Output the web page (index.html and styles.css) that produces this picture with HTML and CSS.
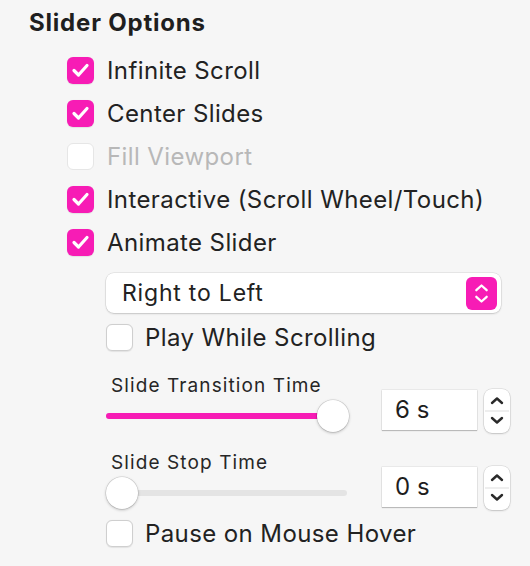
FILE: index.html
```html
<!DOCTYPE html>
<html lang="en">
<head>
  <meta charset="UTF-8">
  <title>Slider Options</title>
  <link rel="stylesheet" href="styles.css">
</head>
<body>
  <div class="panel">
    <h2 class="title">Slider Options</h2>

    <div class="options">
      <label class="check-row">
        <span class="box checked"><svg viewBox="0 0 27 27"><path d="M7 13.5 L11.5 18 L20 8.5" /></svg></span>
        Infinite Scroll
      </label>
      <label class="check-row">
        <span class="box checked"><svg viewBox="0 0 27 27"><path d="M7 13.5 L11.5 18 L20 8.5" /></svg></span>
        Center Slides
      </label>
      <label class="check-row disabled">
        <span class="box"></span>
        Fill Viewport
      </label>
      <label class="check-row">
        <span class="box checked"><svg viewBox="0 0 27 27"><path d="M7 13.5 L11.5 18 L20 8.5" /></svg></span>
        Interactive (Scroll Wheel/Touch)
      </label>
      <label class="check-row">
        <span class="box checked"><svg viewBox="0 0 27 27"><path d="M7 13.5 L11.5 18 L20 8.5" /></svg></span>
        Animate Slider
      </label>

      <div class="sub">
        <div class="select">
          <span>Right to Left</span>
          <span class="select-btn">
            <svg viewBox="0 0 31 35"><path d="M10 14 L15.5 9 L21 14 M10 21 L15.5 26 L21 21" /></svg>
          </span>
        </div>

        <label class="check-row small">
          <span class="box"></span>
          Play While Scrolling
        </label>

        <div class="slider-group">
          <div class="slider-col">
            <div class="slider-label">Slide Transition Time</div>
            <div class="slider">
              <div class="track"><div class="fill" style="width: 94%"></div></div>
              <div class="thumb" style="left: 94%"></div>
            </div>
          </div>
          <div class="field">6 s</div>
          <div class="stepper">
            <svg viewBox="0 0 26 44"><path d="M8 14 L13 9.5 L18 14 M8 29 L13 33.5 L18 29" /><line x1="1" y1="22" x2="25" y2="22" /></svg>
          </div>
        </div>

        <div class="slider-group stop">
          <div class="slider-col">
            <div class="slider-label">Slide Stop Time</div>
            <div class="slider">
              <div class="track"><div class="fill" style="width: 0%"></div></div>
              <div class="thumb" style="left: 6.6%"></div>
            </div>
          </div>
          <div class="field">0 s</div>
          <div class="stepper">
            <svg viewBox="0 0 26 44"><path d="M8 14 L13 9.5 L18 14 M8 29 L13 33.5 L18 29" /><line x1="1" y1="22" x2="25" y2="22" /></svg>
          </div>
        </div>

        <label class="check-row small last">
          <span class="box"></span>
          Pause on Mouse Hover
        </label>
      </div>
    </div>
  </div>
</body>
</html>
```

FILE: styles.css
```css
body {
  margin: 0;
  background: #f6f6f6;
  font-family: Inter, "Noto Sans", "Liberation Sans", sans-serif;
  color: #222222;
}

.panel {
  padding: 8px 0 0 29px;
}

.title {
  margin: 0;
  font-size: 24px;
  font-weight: 700;
  letter-spacing: 0.8px;
  line-height: 30px;
  color: #1f1f1f;
}

.options {
  margin-left: 38px;
  margin-top: 11px;
}

.check-row {
  display: flex;
  align-items: center;
  gap: 13px;
  height: 43px;
  font-size: 24px;
  letter-spacing: 0.4px;
}

.check-row.disabled {
  color: #b8b8b8;
}

.box {
  width: 27px;
  height: 27px;
  box-sizing: border-box;
  border-radius: 6px;
  background: #ffffff;
  border: 1px solid #cfcfcf;
  box-shadow: 0 0.5px 1px rgba(0, 0, 0, 0.08);
  flex-shrink: 0;
}

.check-row.disabled .box {
  border-color: #e6e6e6;
  box-shadow: none;
}

.box.checked {
  background: #f71cb5;
  border: none;
}

.box svg {
  display: block;
  width: 27px;
  height: 27px;
}

.box svg path {
  fill: none;
  stroke: #ffffff;
  stroke-width: 3.2;
  stroke-linecap: round;
  stroke-linejoin: round;
}

.sub {
  margin-left: 39px;
  padding-top: 9px;
}

.select {
  width: 395px;
  height: 40px;
  box-sizing: border-box;
  background: #ffffff;
  border-radius: 8px;
  box-shadow: 0 0 0 0.5px rgba(0, 0, 0, 0.12), 0 1px 2px rgba(0, 0, 0, 0.15);
  display: flex;
  align-items: center;
  justify-content: space-between;
  padding: 0 4px 0 16px;
  font-size: 23px;
  letter-spacing: 0.8px;
}

.select-btn {
  width: 31px;
  height: 33px;
  border-radius: 6px;
  background: #f71cb5;
}

.select-btn svg {
  display: block;
  width: 31px;
  height: 33px;
}

.select-btn svg path {
  fill: none;
  stroke: #ffffff;
  stroke-width: 2.4;
  stroke-linecap: round;
  stroke-linejoin: round;
}

.check-row.small {
  gap: 12px;
  height: 43px;
  margin-top: 3px;
}

.slider-group {
  display: flex;
  align-items: flex-end;
  margin-top: 16px;
}

.slider-group.stop {
  margin-top: 20px;
}

.slider-col {
  width: 241px;
}

.slider-label {
  font-size: 19px;
  letter-spacing: 1.1px;
  line-height: 22px;
  padding-left: 5px;
  color: #262626;
}

.slider {
  position: relative;
  height: 32px;
  margin-top: 3px;
}

.track {
  position: absolute;
  left: 0;
  right: 0;
  top: 13px;
  height: 6px;
  border-radius: 3px;
  background: #e4e4e4;
}

.fill {
  height: 100%;
  border-radius: 3px;
  background: #f71cb5;
}

.thumb {
  position: absolute;
  top: 0;
  width: 32px;
  height: 32px;
  margin-left: -16px;
  border-radius: 50%;
  background: #ffffff;
  box-shadow: 0 0 0 0.5px rgba(0, 0, 0, 0.15), 0 1px 3px rgba(0, 0, 0, 0.25);
}

.field {
  width: 95px;
  height: 40px;
  box-sizing: border-box;
  margin-left: 35px;
  margin-bottom: 2px;
  background: #ffffff;
  box-shadow: 0 0 0 0.5px rgba(0, 0, 0, 0.1), 0 1px 1px rgba(0, 0, 0, 0.2);
  font-size: 24px;
  line-height: 40px;
  padding-left: 13px;
  color: #1e1e1e;
}

.stepper {
  width: 26px;
  height: 44px;
  margin-left: 7px;
  margin-bottom: -1px;
  border-radius: 8px;
  background: #ffffff;
  box-shadow: 0 0 0 0.5px rgba(0, 0, 0, 0.14), 0 1px 2px rgba(0, 0, 0, 0.15);
}

.stepper svg {
  display: block;
  width: 26px;
  height: 44px;
}

.stepper svg path {
  fill: none;
  stroke: #2a2a2a;
  stroke-width: 2.4;
  stroke-linecap: round;
  stroke-linejoin: round;
}

.stepper svg line {
  stroke: #dddddd;
  stroke-width: 1;
}

.check-row.last {
  margin-top: 3px;
}
```
